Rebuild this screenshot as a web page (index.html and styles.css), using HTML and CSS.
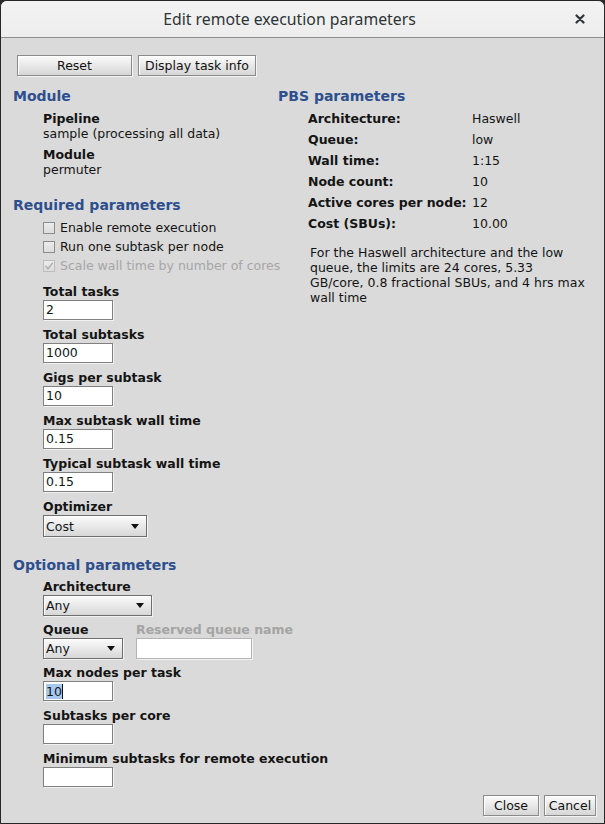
FILE: index.html
```html
<!DOCTYPE html>
<html>
<head>
<meta charset="utf-8">
<link rel="stylesheet" href="styles.css">
</head>
<body>
<div class="window">
  <div class="titlebar">
    <span class="title">Edit remote execution parameters</span>
    <span class="close">
      <svg width="10" height="10" viewBox="0 0 10 10"><path d="M1.5 1.5 L8.5 8.5 M8.5 1.5 L1.5 8.5" stroke="#2e3436" stroke-width="2.2" stroke-linecap="round"/></svg>
    </span>
  </div>
  <div class="content">
    <div class="toolbar">
      <div class="btn btn-reset">Reset</div>
      <div class="btn">Display task info</div>
    </div>
    <div class="columns">
      <div class="col-left">
        <div class="heading h-module">Module</div>
        <div class="group">
          <div class="label l-first">Pipeline</div>
          <div class="value">sample (processing all data)</div>
          <div class="label l-gap">Module</div>
          <div class="value">permuter</div>
        </div>
        <div class="heading h-required">Required parameters</div>
        <div class="group checks">
          <div class="check"><span class="box"></span>Enable remote execution</div>
          <div class="check"><span class="box"></span>Run one subtask per node</div>
          <div class="check disabled"><span class="box"><svg width="10" height="10" viewBox="0 0 10 10"><path d="M1.5 5 L4 7.8 L8.8 1.8" fill="none" stroke="#b0b0b0" stroke-width="1.5"/></svg></span>Scale wall time by number of cores</div>
        </div>
        <div class="group fields">
          <div class="field">
            <div class="label">Total tasks</div>
            <div class="input">2</div>
          </div>
          <div class="field">
            <div class="label">Total subtasks</div>
            <div class="input">1000</div>
          </div>
          <div class="field">
            <div class="label">Gigs per subtask</div>
            <div class="input">10</div>
          </div>
          <div class="field">
            <div class="label">Max subtask wall time</div>
            <div class="input">0.15</div>
          </div>
          <div class="field">
            <div class="label">Typical subtask wall time</div>
            <div class="input">0.15</div>
          </div>
          <div class="field">
            <div class="label">Optimizer</div>
            <div class="select sel-opt"><span>Cost</span><span class="arrow"></span></div>
          </div>
        </div>
        <div class="heading h-optional">Optional parameters</div>
        <div class="group fields">
          <div class="field f-first">
            <div class="label">Architecture</div>
            <div class="select sel-arch"><span>Any</span><span class="arrow"></span></div>
          </div>
          <div class="field-row">
            <div class="field">
              <div class="label">Queue</div>
              <div class="select sel-queue"><span>Any</span><span class="arrow"></span></div>
            </div>
            <div class="field">
              <div class="label disabled-text">Reserved queue name</div>
              <div class="input input-wide"></div>
            </div>
          </div>
          <div class="field f-after-row">
            <div class="label">Max nodes per task</div>
            <div class="input"><span class="selected">10</span><span class="caret"></span></div>
          </div>
          <div class="field">
            <div class="label">Subtasks per core</div>
            <div class="input"></div>
          </div>
          <div class="field">
            <div class="label">Minimum subtasks for remote execution</div>
            <div class="input"></div>
          </div>
        </div>
      </div>
      <div class="col-right">
        <div class="heading h-pbs">PBS parameters</div>
        <div class="pbs-table">
          <div class="k">Architecture:</div><div class="v">Haswell</div>
          <div class="k">Queue:</div><div class="v">low</div>
          <div class="k">Wall time:</div><div class="v">1:15</div>
          <div class="k">Node count:</div><div class="v">10</div>
          <div class="k">Active cores per node:</div><div class="v">12</div>
          <div class="k">Cost (SBUs):</div><div class="v">10.00</div>
        </div>
        <p class="note">For the Haswell architecture and the low queue, the limits are 24 cores, 5.33 GB/core, 0.8 fractional SBUs, and 4 hrs max wall time</p>
      </div>
    </div>
    <div class="footer">
      <div class="btn btn-close">Close</div>
      <div class="btn btn-cancel">Cancel</div>
    </div>
  </div>
</div>
</body>
</html>
```
FILE: styles.css
```css
html, body {
  margin: 0;
  padding: 0;
  background: #2b2b2b;
}
.window {
  width: 605px;
  height: 824px;
  box-sizing: border-box;
  border: 1px solid #262626;
  border-radius: 7px 7px 0 0;
  overflow: hidden;
  display: flex;
  flex-direction: column;
  background: #dadada;
  font-family: "DejaVu Sans", sans-serif;
  font-size: 12.5px;
  color: #141414;
}
.titlebar {
  height: 36px;
  flex: none;
  background: linear-gradient(#f3f3f3, #ededed);
  border-bottom: 1px solid #8e8e8e;
  display: flex;
  align-items: center;
  justify-content: center;
  padding-right: 26px;
  position: relative;
}
.title {
  font-family: "Noto Sans", "Open Sans", sans-serif;
  font-size: 15.8px;
  color: #2e3436;
}
.close {
  position: absolute;
  right: 19px;
  top: 13px;
  width: 10px;
  height: 10px;
  display: flex;
}
.content {
  flex: 1;
  display: flex;
  flex-direction: column;
  padding: 0 0 0 12px;
  white-space: nowrap;
}
.columns {
  display: flex;
}
.col-left {
  width: 265px;
  flex: none;
}
.col-right {
  flex: 1;
}
.toolbar {
  display: flex;
  gap: 6px;
  margin: 17px 0 0 4px;
}
.btn {
  height: 21px;
  box-sizing: border-box;
  border: 1px solid #8a8a8a;
  box-shadow: inset 1px 1px 0 #ffffff, 1px 1px 0 #f4f4f4;
  background: linear-gradient(#fbfbfb, #d6d6d6);
  display: flex;
  align-items: center;
  justify-content: center;
  padding: 0 6px;
  color: #111;
  line-height: 15px;
}
.btn-reset {
  width: 115px;
}
.heading {
  font-weight: bold;
  font-size: 14px;
  line-height: 18px;
  color: #2d4f8e;
}
.h-module, .h-pbs {
  margin-top: 11px;
}
.h-required {
  margin-top: 19px;
}
.h-optional {
  margin-top: 19px;
}
.group {
  padding-left: 30px;
}
.label {
  font-weight: bold;
  line-height: 15px;
  margin-top: 5px;
}
.label.l-first {
  margin-top: 6px;
}
.value {
  line-height: 15px;
}
.l-gap {
  margin-top: 6px;
}
.disabled-text {
  color: #a4a4a4;
}
.checks {
  margin-top: 4px;
}
.check {
  height: 19px;
  display: flex;
  align-items: center;
  gap: 5px;
}
.check.disabled {
  color: #a6a6a6;
}
.box {
  width: 10px;
  height: 10px;
  border: 1px solid #8c8c8c;
  background: linear-gradient(#ececec, #dcdcdc);
  display: flex;
  align-items: center;
  justify-content: center;
}
.check.disabled .box {
  border-color: #bdbdbd;
}
.fields .field {
  margin-top: 7px;
}
.fields .field .label {
  margin-top: 0;
  margin-bottom: 1px;
}
.checks + .fields .field:first-child {
  margin-top: 9px;
}
.fields .field.f-first {
  margin-top: 5px;
}
.field-row {
  display: flex;
  gap: 13px;
}
.fields .field-row .field {
  margin-top: 6px;
}
.fields .field.f-after-row {
  margin-top: 6px;
}
.input {
  width: 70px;
  height: 20px;
  box-sizing: border-box;
  background: #fff;
  border: 1px solid #808080;
  box-shadow: 1px 1px 0 #f2f2f2;
  padding: 0 2px;
  line-height: 18px;
  display: flex;
  align-items: center;
}
.input-wide {
  width: 116px;
  height: 21px;
  border-color: #b4b4b4;
}
.selected {
  background: #a6c8ef;
  line-height: 15px;
}
.caret {
  width: 1px;
  height: 15px;
  background: #111;
}
.select {
  height: 21px;
  box-sizing: border-box;
  border: 1px solid #6e6e6e;
  box-shadow: inset 1px 1px 0 #fff, 1px 1px 0 #f2f2f2;
  background: linear-gradient(#fbfbfb, #d7d7d7);
  display: flex;
  align-items: center;
  justify-content: space-between;
  padding: 0 7px 0 2px;
}
.sel-opt { width: 104px; height: 22px; }
.sel-arch { width: 109px; }
.sel-queue { width: 80px; }
.arrow {
  width: 0;
  height: 0;
  border-left: 4.5px solid transparent;
  border-right: 4.5px solid transparent;
  border-top: 5px solid #111;
}
.pbs-table {
  display: grid;
  grid-template-columns: 164px auto;
  grid-auto-rows: 21px;
  padding-left: 30px;
  margin-top: 3px;
  align-items: center;
}
.pbs-table .k {
  font-weight: bold;
}
.note {
  margin: 11px 0 0 32px;
  width: 280px;
  line-height: 15px;
  white-space: normal;
}
.footer {
  margin-top: auto;
  display: flex;
  justify-content: flex-end;
  gap: 5px;
  padding: 0 8px 7px 0;
}
.btn-close { width: 56px; }
.btn-cancel { width: 52px; padding: 0; }
```
